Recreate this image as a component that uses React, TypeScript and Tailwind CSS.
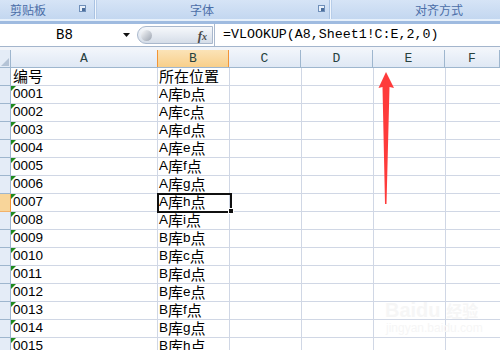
import React from "react";

const rows: [string, string][] = [
  ["编号", "所在位置"],
  ["0001", "A库b点"],
  ["0002", "A库c点"],
  ["0003", "A库d点"],
  ["0004", "A库e点"],
  ["0005", "A库f点"],
  ["0006", "A库g点"],
  ["0007", "A库h点"],
  ["0008", "A库i点"],
  ["0009", "B库b点"],
  ["0010", "B库c点"],
  ["0011", "B库d点"],
  ["0012", "B库e点"],
  ["0013", "B库f点"],
  ["0014", "B库g点"],
  ["0015", "B库h点"],
];

const isCjk = (s: string) => /[\u4e00-\u9fff]/.test(s);

function Mixed({ t }: { t: string }) {
  const parts = t.split(/([\u4e00-\u9fff]+)/).filter((p) => p.length > 0);
  return (
    <>
      {parts.map((p, i) =>
        isCjk(p) ? (
          <span key={i} className="font-['Noto_Sans_CJK_SC',sans-serif] text-[15px] leading-[16px]">
            {p}
          </span>
        ) : (
          <span key={i} className="font-['Liberation_Sans',sans-serif] text-[13.5px] leading-[16px]">
            {p}
          </span>
        )
      )}
    </>
  );
}

function Launcher() {
  return (
    <div className="w-[7px] h-[7px] border border-[#6f8fb9] bg-[#e8f0fa] relative">
      <div className="absolute right-0 bottom-0 w-[3px] h-[3px] bg-[#4b6d9b]" />
    </div>
  );
}

const colHeaders: [string, string][] = [
  ["A", "w-[147px]"],
  ["B", "w-[72px]"],
  ["C", "w-[72px]"],
  ["D", "w-[72px]"],
  ["E", "w-[72px]"],
  ["F", "flex-1"],
];

export default function App() {
  return (
    <div className="w-[500px] h-[350px] overflow-hidden bg-white relative">
      {/* Ribbon */}
      <div className="h-[19px] flex bg-gradient-to-b from-[#d6e4f6] to-[#c3d7f0] font-['Noto_Sans_CJK_SC',sans-serif] text-[12px] text-[#4b6ea8]">
        <div className="w-[94px] flex items-center relative">
          <span className="ml-[10px] leading-none">剪贴板</span>
          <div className="absolute left-[79px] top-[5px]">
            <Launcher />
          </div>
        </div>
        <div className="w-[3px] flex">
          <div className="w-[1px] bg-[#a9c2e2]" />
          <div className="w-[1px] bg-[#f2f7fd]" />
          <div className="w-[1px] bg-[#b7cde9]" />
        </div>
        <div className="w-[232px] flex items-center relative">
          <span className="ml-[93px] leading-none">字体</span>
          <div className="absolute left-[221px] top-[5px]">
            <Launcher />
          </div>
        </div>
        <div className="w-[3px] flex">
          <div className="w-[1px] bg-[#a9c2e2]" />
          <div className="w-[1px] bg-[#f2f7fd]" />
          <div className="w-[1px] bg-[#b7cde9]" />
        </div>
        <div className="flex-1 flex items-center">
          <span className="ml-[83px] leading-none">对齐方式</span>
        </div>
      </div>
      <div className="h-[2px] bg-[#e6f0fb]" />
      <div className="h-[3px] bg-[#9fbbe0]" />

      {/* Formula bar */}
      <div className="h-[22px] flex bg-white">
        <div className="w-[121px] flex items-center justify-center font-['Liberation_Mono',monospace] text-[14px] text-black pl-[8px]">
          B8
        </div>
        <div className="w-[16px] flex items-center">
          <svg width="7" height="4" viewBox="0 0 7 4" className="ml-[2px]">
            <polygon points="0,0 7,0 3.5,4" fill="#111" />
          </svg>
        </div>
        <div className="w-[76px] my-[2px] rounded-l-full border border-[#a9b8cd] bg-gradient-to-b from-[#f6f8fb] via-[#e6ebf2] to-[#d5dde8] flex items-center">
          <div className="w-[11px] h-[11px] ml-[3px] rounded-full bg-gradient-to-br from-[#fafbfc] via-[#c9ced6] to-[#9ca4b0]" />
          <span className="ml-auto mr-[5px] font-['Liberation_Serif',serif] italic font-bold text-[13px] text-[#4a4a4a] leading-none">
            f<span className="text-[10px]">x</span>
          </span>
        </div>
        <div className="w-[1px] bg-[#a9b8cd] ml-[1px]" />
        <div className="flex-1 flex items-center pl-[8px] font-['Liberation_Mono',monospace] text-[13.3px] text-black whitespace-nowrap">
          =VLOOKUP(A8,Sheet1!C:E,2,0)
        </div>
      </div>
      <div className="h-[1px] bg-[#a3b5cc]" />
      <div className="h-[3px] bg-[#f1f4f9]" />

      {/* Grid */}
      <div className="relative">
        {/* Header row */}
        <div className="h-[18px] flex border-b border-[#9eb6ce] bg-gradient-to-b from-[#f1f5fb] to-[#dfe8f4] font-['Liberation_Mono',monospace] text-[13px] text-[#27413e]">
          <div className="w-[11px] border-r border-[#9eb6ce] relative bg-[#e4ecf7]">
            <svg width="8" height="8" viewBox="0 0 8 8" className="absolute right-[1px] bottom-[1px]">
              <polygon points="8,0 8,8 0,8" fill="#b4c3d6" />
            </svg>
          </div>
          {colHeaders.map(([l, w]) => (
            <div
              key={l}
              className={`${w} flex items-center justify-center border-r ${
                l === "B"
                  ? "border-[#f29436] bg-gradient-to-b from-[#fbe3b7] to-[#f8cf8a] border-l -ml-[1px]"
                  : "border-[#9eb6ce]"
              }`}
            >
              {l}
            </div>
          ))}
        </div>
        {rows.map(([a, b], i) => {
          const rowNum = i + 1;
          const sel = rowNum === 8;
          return (
            <div key={i} className="h-[18px] flex">
              <div
                className={`w-[11px] border-r border-b ${
                  sel ? "bg-[#f8d59a] border-r-[#f29436] border-b-[#f2b26a]" : "bg-[#e4ecf7] border-[#9eb6ce]"
                }`}
              />
              <div className="w-[147px] border-r border-b border-[#d0d7e5] relative flex items-end pl-[2px] pb-[1px] text-black overflow-hidden whitespace-nowrap">
                {i > 0 && (
                  <svg width="5" height="5" viewBox="0 0 5 5" className="absolute left-0 top-0">
                    <polygon points="0,0 5,0 0,5" fill="#1e8a1e" />
                  </svg>
                )}
                <Mixed t={a} />
              </div>
              <div className="w-[72px] border-r border-b border-[#d0d7e5] flex items-end pl-[1px] pb-[1px] text-black overflow-hidden whitespace-nowrap">
                <Mixed t={b} />
              </div>
              <div className="w-[72px] border-r border-b border-[#d0d7e5]" />
              <div className="w-[72px] border-r border-b border-[#d0d7e5]" />
              <div className="w-[72px] border-r border-b border-[#d0d7e5]" />
              <div className="flex-1 border-b border-[#d0d7e5]" />
            </div>
          );
        })}

        {/* Selection box on B8 */}
        <div className="absolute left-[157px] top-[143px] w-[75px] h-[20px] border-2 border-[#101010] pointer-events-none" />
        <div className="absolute left-[228px] top-[158px] w-[6px] h-[6px] bg-[#101010] border border-white" />

        {/* Watermark */}
        <div className="absolute left-[385px] top-[250px] text-[#f6f6f6] font-['Liberation_Sans',sans-serif] text-[20px] font-bold leading-none">
          Baidu <span className="font-['Noto_Sans_CJK_SC',sans-serif] text-[16px]">经验</span>
        </div>
        <div className="absolute left-[386px] top-[272px] text-[#f6f6f6] font-['Liberation_Sans',sans-serif] text-[12px] leading-none">
          jingyan.baidu.com
        </div>
      </div>

      {/* Red arrow */}
      <svg width="500" height="350" className="absolute left-0 top-0 pointer-events-none">
        <polygon
          points="386,72 394,88 389.5,87 386.5,204 385,204 382.5,87 378.5,88"
          fill="#fe3b3b"
        />
      </svg>
    </div>
  );
}
